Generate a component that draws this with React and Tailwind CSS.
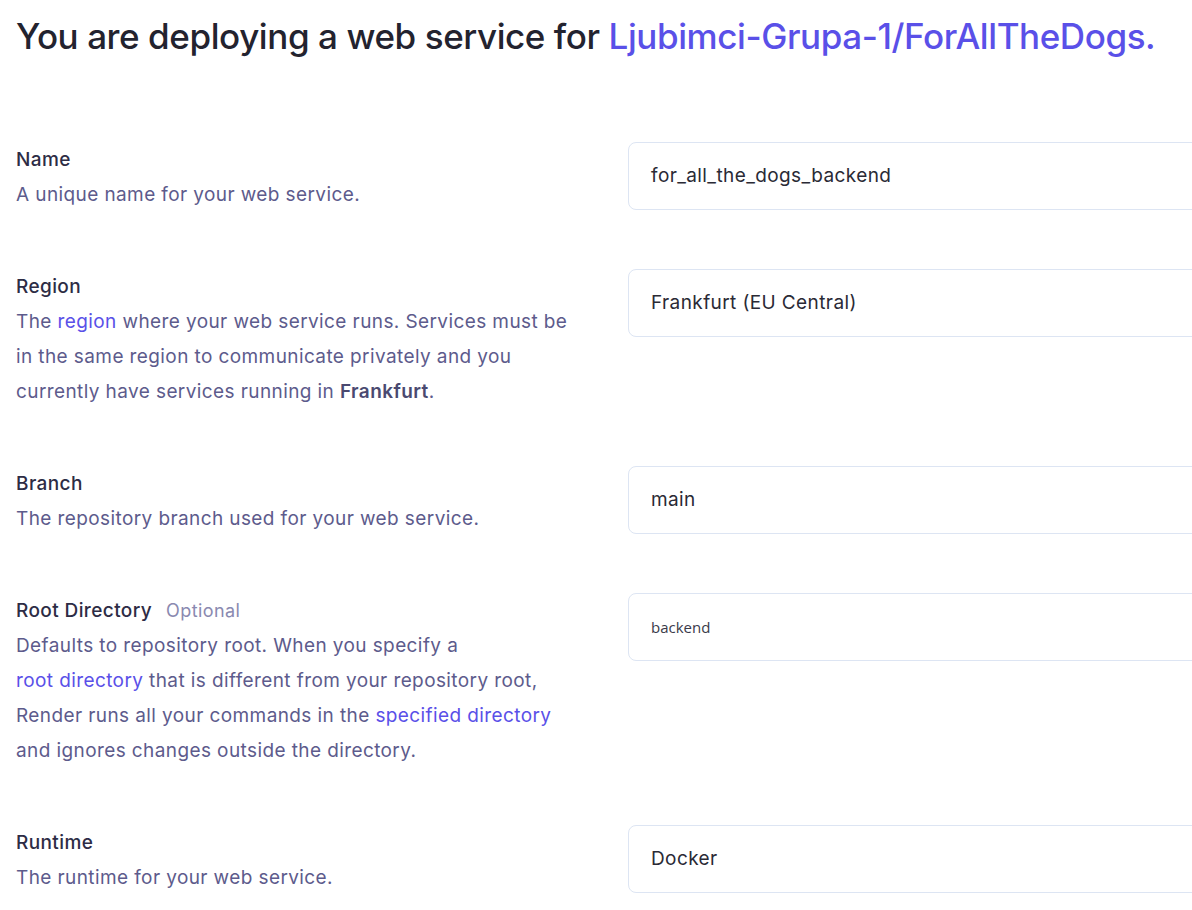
const rows = [
  {
    label: "Name",
    desc: <>A unique name for your web service.</>,
    value: "for_all_the_dogs_backend",
  },
  {
    label: "Region",
    desc: (
      <>
        The <a className="text-[#5a50e8]">region</a> where your web service runs. Services must be in the same region to
        communicate privately and you currently have services running in{" "}
        <span className="font-semibold text-[#4a4970]">Frankfurt</span>.
      </>
    ),
    value: "Frankfurt (EU Central)",
  },
  {
    label: "Branch",
    desc: <>The repository branch used for your web service.</>,
    value: "main",
  },
  {
    label: "Root Directory",
    optional: true,
    desc: (
      <>
        Defaults to repository root. When you specify a{" "}
        <a className="whitespace-nowrap text-[#5a50e8]">root directory</a> that is different from your repository root,
        Render runs all your commands in the <a className="whitespace-nowrap text-[#5a50e8]">specified directory</a> and
        ignores changes outside the directory.
      </>
    ),
    value: "backend",
    small: true,
  },
  {
    label: "Runtime",
    desc: <>The runtime for your web service.</>,
    value: "Docker",
  },
];

const FieldRow = ({ row }) => (
  <div className="flex">
    <div className="mr-[42px] w-[570px] shrink-0 text-[19px] leading-[35px] tracking-[0.4px]">
      <div className="flex items-baseline gap-[14px]">
        <span className="font-medium text-[#2d2c45]">{row.label}</span>
        {row.optional && <span className="text-[18px] text-[#8a89b0]">Optional</span>}
      </div>
      <p className="text-[#5d5b8c]">{row.desc}</p>
    </div>
    <div className="flex h-[68px] w-[600px] shrink-0 items-center rounded-lg border border-[#dde5f3] bg-white px-[22px]">
      {row.small ? (
        <span className="text-[15px] text-[#3a3a4a]" style={{ fontFamily: '"Open Sans", "Noto Sans", sans-serif' }}>
          {row.value}
        </span>
      ) : (
        <span className="text-[19px] tracking-[0.4px] text-[#2a2a35]">{row.value}</span>
      )}
    </div>
  </div>
);

export default function App() {
  return (
    <div
      className="h-[910px] w-[1192px] overflow-hidden bg-white pl-4"
      style={{ fontFamily: 'Inter, "Noto Sans", sans-serif' }}
    >
      <h1 className="whitespace-nowrap pt-[12px] text-[35px] leading-[48px] font-medium tracking-[-0.012em] text-[#23232f]">
        You are deploying a web service for <span className="text-[#5a50e8]">Ljubimci-Grupa-1/ForAllTheDogs.</span>
      </h1>
      <div className="mt-[82px] flex flex-col gap-[57px]">
        {rows.map((row) => (
          <FieldRow key={row.label} row={row} />
        ))}
      </div>
    </div>
  );
}
